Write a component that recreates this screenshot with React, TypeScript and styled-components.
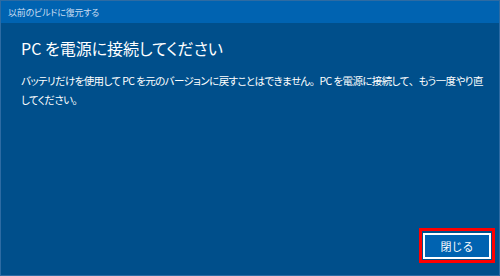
import styled, { createGlobalStyle } from 'styled-components';

const GlobalStyle = createGlobalStyle`
  html, body {
    margin: 0;
    padding: 0;
    background: #004e8c;
  }
  * {
    box-sizing: border-box;
  }
`

const Window = styled.div`
  width: 500px;
  height: 276px;
  display: flex;
  flex-direction: column;
  border: 1px solid #2d6ba3;
  background-color: #004f8b;
  font-family: "Noto Sans CJK JP", "Noto Sans", sans-serif;
  font-feature-settings: "palt";
  color: #ffffff;
`

const TitleBar = styled.div`
  height: 22px;
  display: flex;
  align-items: center;
  padding-left: 7px;
  background-color: #0063b1;
  color: #c9ddf1;
  font-size: 9px;
  letter-spacing: -0.2px;
`

const Content = styled.div`
  flex: 1;
  display: flex;
  flex-direction: column;
  padding: 13px 12px 0 20px;

  h1 {
    margin: 0;
    font-size: 16px;
    font-weight: 400;
    line-height: 24px;
  }

  p {
    margin: 11px 0 0;
    font-size: 10.5px;
    line-height: 19px;
    letter-spacing: -0.6px;
  }
`

// full-width punctuation, as the dialog's font draws it
const Punct = styled.span`
  font-feature-settings: normal;
`

const Footer = styled.div`
  display: flex;
  justify-content: flex-end;
  padding: 0 4px 12px 0;
`

const Highlight = styled.div`
  border: 3px solid #ff0000;
  padding: 1px;
`

const Button = styled.button`
  width: 68px;
  height: 26px;
  border: 2px solid #ffffff;
  background-color: #0063b1;
  color: #ffffff;
  font-family: inherit;
  font-size: 11px;
  padding: 0;
`

export default function App() {
  return (
    <>
      <GlobalStyle />
      <Window>
        <TitleBar>以前のビルドに復元する</TitleBar>
        <Content>
          <h1>PC を電源に接続してください</h1>
          <p>
            バッテリだけを使用して PC を元のバージョンに戻すことはできません<Punct>。</Punct>PC を電源に接続して<Punct>、</Punct>もう一度やり直してください<Punct>。</Punct>
          </p>
        </Content>
        <Footer>
          <Highlight>
            <Button>閉じる</Button>
          </Highlight>
        </Footer>
      </Window>
    </>
  );
}
